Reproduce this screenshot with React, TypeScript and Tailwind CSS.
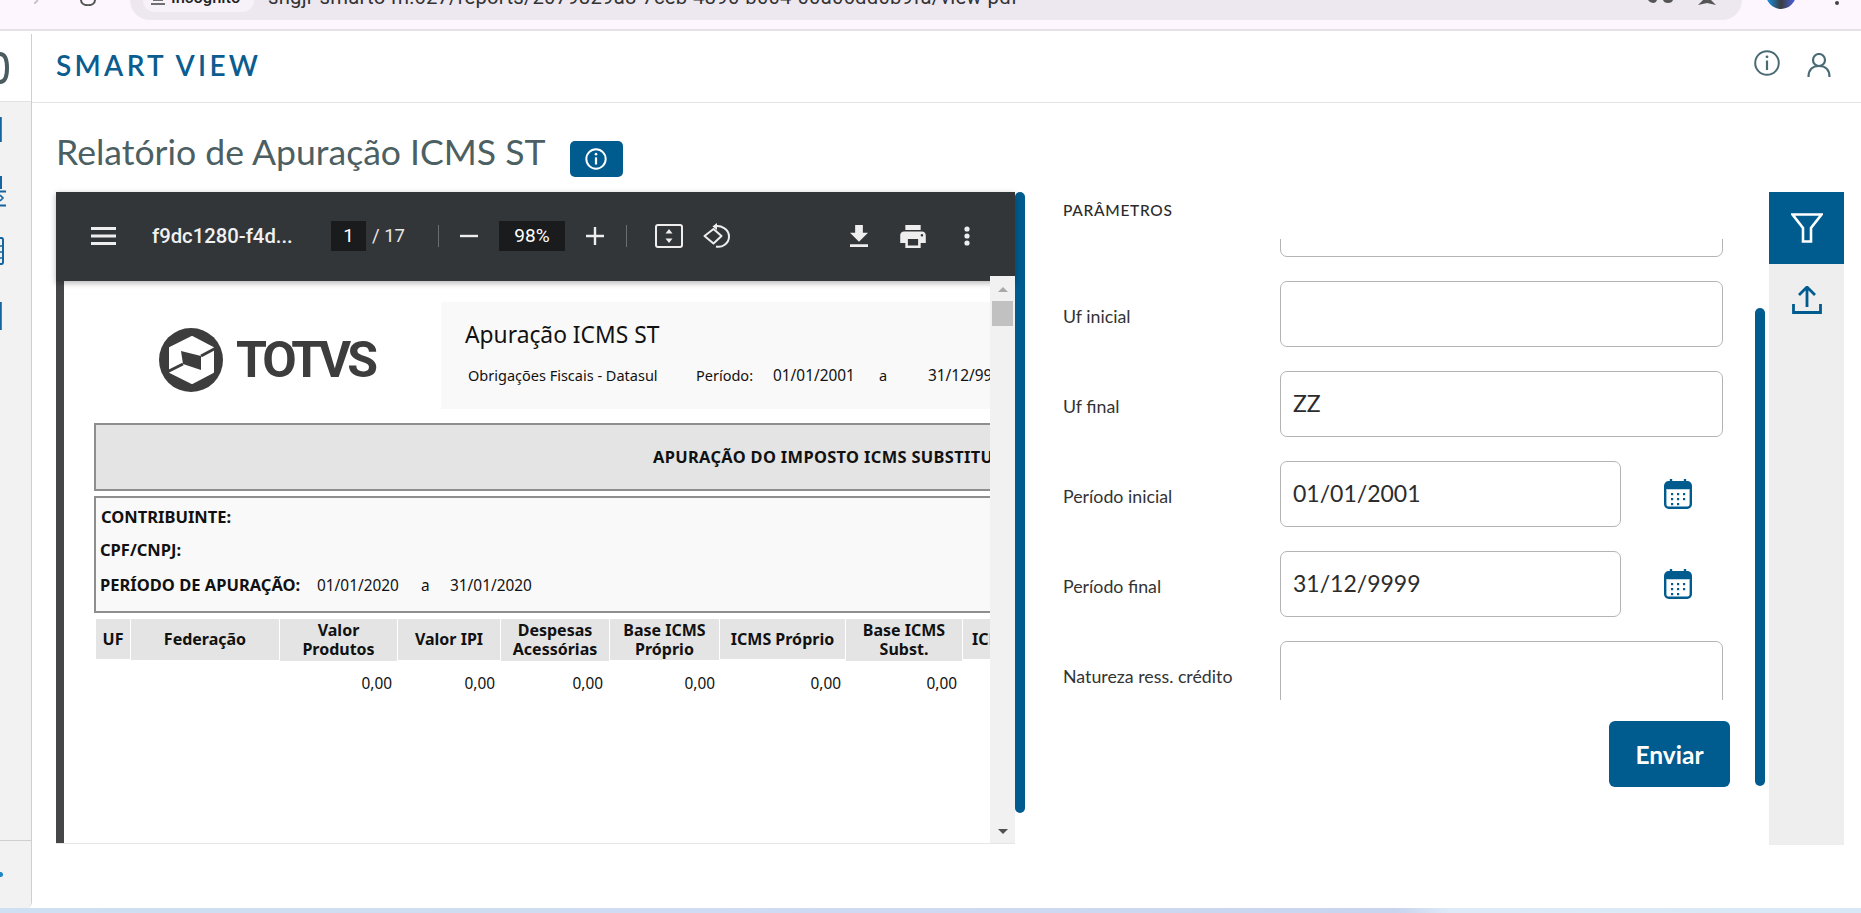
import React from "react";

const BLUE = "#005b8f";

function Calendar() {
  return (
    <svg width="28" height="30" viewBox="0 0 28 30" className="shrink-0">
      <path d="M7 0v5M21 0v5" stroke={BLUE} strokeWidth="2.4" />
      <rect x="1.2" y="3.2" width="25.6" height="25.6" rx="3.5" fill="none" stroke={BLUE} strokeWidth="2.4" />
      <rect x="1.2" y="3.2" width="25.6" height="7" rx="2" fill={BLUE} />
      {[8, 14, 20].map((x) => [15, 20, 25].map((y) => (y === 25 && x === 20 ? null : <rect key={`${x}-${y}`} x={x - 1} y={y - 1} width="2.2" height="2.2" fill={BLUE} />)))}
    </svg>
  );
}

function Field({ label, value, short, clipTop }: { label: string; value?: string; short?: boolean; clipTop?: boolean }) {
  return (
    <div className={`flex items-center shrink-0 h-[66px] pl-[38px] ${clipTop ? "-mt-[48px]" : ""}`}>
      <span className="w-[217px] shrink-0 pt-[4px] text-[17.8px] text-[#333]">{label}</span>
      <input
        readOnly
        value={value ?? ""}
        className={`h-[66px] rounded-[7px] border border-[#b4b4b4] bg-white px-[12px] pb-[2px] text-[23px] text-[#2c2c2c] outline-none ${short ? "w-[341px]" : "w-[443px]"}`}
      />
      {short && (
        <span className="ml-[43px] flex items-center">
          <Calendar />
        </span>
      )}
    </div>
  );
}

const heads = [
  { t: "UF", c: "w-[34px] h-[40px] justify-center" },
  { t: "Federação", c: "w-[148px] h-[41px] justify-center" },
  { t: "Valor Produtos", c: "w-[117px] h-[42px] px-6 justify-center" },
  { t: "Valor IPI", c: "w-[102px] h-[41px] justify-center" },
  { t: "Despesas Acessórias", c: "w-[108px] h-[42px] justify-center" },
  { t: "Base ICMS Próprio", c: "w-[109px] h-[41px] justify-center" },
  { t: "ICMS Próprio", c: "w-[125px] h-[40px] justify-center" },
  { t: "Base ICMS Subst.", c: "w-[116px] h-[42px] px-4 justify-center" },
  { t: "ICMS Subst.", c: "w-[140px] h-[40px] pl-[9px] justify-start whitespace-nowrap" },
];

const vals = [
  { c: "w-[34px]" },
  { c: "w-[148px]" },
  { c: "w-[117px] pr-[5px]", v: "0,00" },
  { c: "w-[102px] pr-[5px]", v: "0,00" },
  { c: "w-[108px] pr-[6px]", v: "0,00" },
  { c: "w-[109px] pr-[4px]", v: "0,00" },
  { c: "w-[125px] pr-[4px]", v: "0,00" },
  { c: "w-[116px] pr-[5px]", v: "0,00" },
];

function Toolbar() {
  return (
    <div className="relative z-10 flex h-[89px] shrink-0 items-center bg-[#323639] pb-[1px] text-white shadow-[0_2px_6px_rgba(0,0,0,0.3)] font-['Roboto',sans-serif]">
      <svg width="25" height="18" viewBox="0 0 25 18" className="ml-[35px]">
        <path d="M0 1.5h25M0 9h25M0 16.5h25" stroke="#eee" strokeWidth="3" />
      </svg>
      <span className="ml-[36px] w-[146px] text-[20.3px] font-medium whitespace-nowrap text-[#f1f1f1]">f9dc1280-f4d...</span>
      <span className="ml-[33px] flex h-[30px] w-[35px] items-center justify-center bg-[#191b1c] text-[19px]">1</span>
      <span className="ml-[6px] mt-[2px] w-[34px] text-[18.5px] whitespace-nowrap text-[#e8e8e8]">/ 17</span>
      <span className="ml-[32px] h-[22px] w-px bg-[#6b6e70]" />
      <svg width="18" height="4" viewBox="0 0 18 4" className="ml-[21px]">
        <path d="M0 2h18" stroke="#eee" strokeWidth="2.4" />
      </svg>
      <span className="ml-[21px] flex h-[30px] w-[66px] items-center justify-center bg-[#191b1c] text-[19px]">98%</span>
      <svg width="18" height="18" viewBox="0 0 18 18" className="ml-[21px]">
        <path d="M0 9h18M9 0v18" stroke="#eee" strokeWidth="2.4" />
      </svg>
      <span className="ml-[22px] h-[22px] w-px bg-[#6b6e70]" />
      <svg width="28" height="24" viewBox="0 0 28 24" className="ml-[28px]">
        <rect x="1" y="1" width="26" height="22" rx="2" fill="none" stroke="#eee" strokeWidth="2" />
        <path d="M14 5l-3.5 4.5h7zM14 19l-3.5-4.5h7z" fill="#eee" />
      </svg>
      <svg width="28" height="26" viewBox="0 0 28 26" className="ml-[20px]">
        <path d="M1.5 13L10.5 6l8 7-8 7.5z" fill="none" stroke="#eee" strokeWidth="2" strokeLinejoin="round" />
        <path d="M11 3.5c7-1.6 15 2.5 15 10 0 7-7 11.5-13 10" fill="none" stroke="#eee" strokeWidth="2" />
        <path d="M14 0v7l-4.5-3.5z" fill="#eee" />
      </svg>
      <svg width="18" height="22" viewBox="5 3 14 17" className="ml-[119px]">
        <path d="M19 9h-4V3H9v6H5l7 7 7-7zM5 18v2h14v-2H5z" fill="#eee" />
      </svg>
      <svg width="26" height="23" viewBox="2 3 20 18" className="ml-[32px]">
        <path d="M19 8H5c-1.66 0-3 1.34-3 3v6h4v4h12v-4h4v-6c0-1.66-1.34-3-3-3zm-3 11H8v-5h8v5zm3-7c-.55 0-1-.45-1-1s.45-1 1-1 1 .45 1 1-.45 1-1 1zm-1-9H6v4h12V3z" fill="#eee" />
      </svg>
      <svg width="6" height="20" viewBox="0 0 6 20" className="ml-[38px]">
        <circle cx="3" cy="3" r="2.6" fill="#eee" />
        <circle cx="3" cy="10" r="2.6" fill="#eee" />
        <circle cx="3" cy="17" r="2.6" fill="#eee" />
      </svg>
    </div>
  );
}

function Logo() {
  return (
    <div className="mt-[26px] ml-[95px] flex w-[282px] shrink-0 items-center self-start">
      <svg width="64" height="64" viewBox="0 0 64 64" className="shrink-0">
        <circle cx="32" cy="32" r="32" fill="#3d3d3d" />
        <path d="M11 20L33 9l21 11v24L33 55 11 44z" fill="#fff" stroke="#fff" strokeWidth="2" strokeLinejoin="round" />
        <path d="M22 23l20 5v14l-18-6z" fill="#3d3d3d" />
        <path d="M42 28L57 20M24 36L8 44" stroke="#3d3d3d" strokeWidth="3" />
      </svg>
      <span className="ml-[13px] text-[50px] leading-none font-bold tracking-[-4px] text-[#3d3d3d] font-['Roboto',sans-serif]">TOTVS</span>
    </div>
  );
}

function PdfPage() {
  return (
    <div className="h-full w-[926px] shrink-0 overflow-hidden bg-white font-['Noto_Sans',sans-serif] text-[#111]">
      <div className="w-[1200px]">
        <div className="flex pt-[21px]">
          <Logo />
          <div className="h-[107px] w-[700px] bg-[#f9f9f9] pl-[24px] pt-[13px]">
            <div className="text-[22.8px] leading-[40px] text-[#111]">Apuração ICMS ST</div>
            <div className="mt-[9px] flex items-baseline pl-[3px] text-[14.5px] leading-[22px]">
              <span className="w-[228px]">Obrigações Fiscais - Datasul</span>
              <span className="w-[77px]">Período:</span>
              <span className="w-[106px] text-[15.4px]">01/01/2001</span>
              <span className="w-[49px]">a</span>
              <span className="text-[15.4px]">31/12/9999</span>
            </div>
          </div>
        </div>
        <div className="mt-[14px] ml-[30px] flex h-[68px] items-center border-y-2 border-l-2 border-[#8e8e8e] bg-[#e4e4e4] pl-[557px] text-[16.4px] font-bold tracking-[0.35px] whitespace-nowrap">
          APURAÇÃO DO IMPOSTO ICMS SUBSTITUIÇÃO TRIBUTÁRIA
        </div>
        <div className="mt-[5px] ml-[30px] h-[117px] border-y-2 border-l-2 border-[#8e8e8e] bg-[#f9f9f9] pl-[4px] text-[16.5px] leading-[22px]">
          <div className="pt-[8px] pl-[1px] font-bold">CONTRIBUINTE:</div>
          <div className="mt-[11px] font-bold">CPF/CNPJ:</div>
          <div className="mt-[13px] flex items-baseline">
            <span className="w-[217px] font-bold">PERÍODO DE APURAÇÃO:</span>
            <span className="w-[104px] text-[15.4px]">01/01/2020</span>
            <span className="w-[29px] text-[15.4px]">a</span>
            <span className="text-[15.4px]">31/01/2020</span>
          </div>
        </div>
        <div className="mt-[6px] ml-[32px] flex items-start gap-[1px] text-[16px] leading-[19px] font-bold text-center">
          {heads.map((h) => (
            <div key={h.t} className={`flex shrink-0 items-center bg-[#e4e4e4] ${h.c}`}>
              {h.t}
            </div>
          ))}
        </div>
        <div className="mt-[12px] ml-[32px] flex gap-[1px] text-[15.4px] leading-[22px] text-right">
          {vals.map((v, i) => (
            <div key={i} className={`shrink-0 ${v.c}`}>
              {v.v ?? ""}
            </div>
          ))}
        </div>
      </div>
    </div>
  );
}

function PdfScrollbar() {
  return (
    <div className="relative z-20 -mt-[5px] flex h-[calc(100%+5px)] w-[25px] shrink-0 flex-col items-center justify-between bg-[#f1f1f1] pt-[11px] pb-[9px]">
      <div className="flex flex-col items-center">
        <span className="h-0 w-0 border-x-[5px] border-b-[5px] border-x-transparent border-b-[#a8a8a8]" />
        <span className="mt-[9px] h-[25px] w-[21px] bg-[#c1c1c1]" />
      </div>
      <span className="h-0 w-0 border-x-[5px] border-t-[5px] border-x-transparent border-t-[#505050]" />
    </div>
  );
}

function Viewer() {
  return (
    <div className="flex h-[652px] w-[959px] shrink-0 flex-col border-b border-[#e6e6e6]">
      <Toolbar />
      <div className="flex min-h-0 flex-1">
        <div className="w-[8px] shrink-0 bg-[#444648]" />
        <PdfPage />
        <PdfScrollbar />
      </div>
    </div>
  );
}

function Form() {
  return (
    <div className="flex h-[652px] w-[730px] shrink-0 flex-col font-['Lato',sans-serif]">
      <div className="h-[47px] shrink-0 pl-[38px] pt-[8px] text-[15.5px] leading-[20px] font-medium tracking-[0.7px] text-[#2b2b2b]">PARÂMETROS</div>
      <div className="flex h-[461px] shrink-0 flex-col gap-[24px] overflow-hidden">
        <Field label="" clipTop />
        <Field label="Uf inicial" />
        <Field label="Uf final" value="ZZ" />
        <Field label="Período inicial" value="01/01/2001" short />
        <Field label="Período final" value="31/12/9999" short />
        <Field label="Natureza ress. crédito" />
      </div>
      <div className="mt-[21px] flex justify-end pr-[25px]">
        <button className="h-[66px] w-[121px] rounded-[6px] bg-[#005b8f] pt-[2px] text-[24.5px] font-bold text-white">Enviar</button>
      </div>
    </div>
  );
}

function SideRail() {
  return (
    <div className="ml-[4px] flex h-[653px] w-[75px] shrink-0 flex-col bg-[#eeeeee]">
      <div className="flex h-[72px] items-center justify-center bg-[#005b8f]">
        <svg width="32" height="30" viewBox="0 0 32 30">
          <path d="M1.5 1.5h29L20 15v13.5h-8V15z" fill="none" stroke="#fff" strokeWidth="2.6" />
        </svg>
      </div>
      <div className="flex justify-center pt-[22px]">
        <svg width="30" height="28" viewBox="0 0 30 28">
          <path d="M15 1.5V21M7 9l8-8 8 8" fill="none" stroke={BLUE} strokeWidth="2.8" />
          <path d="M1.5 18v8.5h27V18" fill="none" stroke={BLUE} strokeWidth="2.8" />
        </svg>
      </div>
    </div>
  );
}

function Chrome() {
  return (
    <div className="flex h-[31px] shrink-0 overflow-hidden border-b-2 border-[#e6e0e9] bg-[#fdf6fe] font-['Roboto',sans-serif] text-[#444]">
      <div className="flex w-[130px] shrink-0 items-start">
        <svg width="8" height="4" viewBox="0 0 8 4" className="ml-[34px]">
          <path d="M0 4L4 0" stroke="#c9c4cc" strokeWidth="2" />
        </svg>
        <svg width="16" height="6" viewBox="0 0 16 6" className="ml-[38px]">
          <path d="M1 0c0 7 14 7 14 0" fill="none" stroke="#555" strokeWidth="2" />
        </svg>
      </div>
      <div className="flex h-[20px] w-[1612px] shrink-0 items-start overflow-hidden rounded-b-[24px] bg-[#ede7f0]">
        <div className="ml-[13px] flex h-[12px] w-[111px] shrink-0 items-start overflow-hidden rounded-b-[12px] bg-[#f7f2f9] pl-[7px]">
          <svg width="16" height="5" viewBox="0 0 16 5" className="shrink-0">
            <path d="M3 0h10M1 4h14" stroke="#444" strokeWidth="1.6" />
          </svg>
          <span className="-mt-[10px] ml-[5px] text-[16.5px] leading-[16px] font-medium text-[#222]">Incógnito</span>
        </div>
        <div className="ml-[14px] h-[20px] w-[920px] shrink-0 overflow-hidden text-[20.3px] leading-[20px] tracking-[0.2px] whitespace-nowrap text-[#333]">
          <div className="-mt-[13px]">shgjr-smarto-m:627/reports/2079329a8-7ceb-4390-b004-00a06dd0b9fa/view-pdf</div>
        </div>
        <div className="ml-auto flex h-[20px] w-[94px] shrink-0 items-start">
          <svg width="26" height="3" viewBox="0 0 26 3">
            <path d="M0 0h9q-1 3-4 3t-5-3zM15 0h10q-1 3-5 3t-5-3z" fill="#555" />
          </svg>
          <svg width="18" height="5" viewBox="0 0 18 5" className="ml-[24px]">
            <path d="M5 0h8l5 5-9-2-9 2z" fill="#555" />
          </svg>
        </div>
      </div>
      <div className="flex flex-1 items-start">
        <span className="-mt-[21px] ml-[24px] h-[30px] w-[30px] rounded-full bg-[linear-gradient(90deg,#1296f3,#3c3c3c_50%,#4a63f0)]" />
        <span className="ml-[39px] mt-[1px] h-[4px] w-[4px] rounded-full bg-[#444]" />
      </div>
    </div>
  );
}

function Sidebar() {
  const c = "#1565a0";
  return (
    <div className="mt-[3px] flex w-[32px] shrink-0 flex-col overflow-hidden rounded-br-[6px] border-r border-[#cfcfcf]">
      <div className="flex h-[68px] shrink-0 items-center border-b border-[#e3e3e3] bg-white">
        <svg width="10" height="32" viewBox="0 0 10 32">
          <path d="M0 2c5 0 7 6 7 14s-2 14-7 14" fill="none" stroke="#4a5c60" strokeWidth="4" />
        </svg>
      </div>
      <div className="flex h-[739px] shrink-0 flex-col items-start border-b border-[#cfcfcf] bg-[#f2f2f2] pt-[15px]">
        <svg width="8" height="25" viewBox="0 0 8 25"><path d="M0.8 0v25" stroke={c} strokeWidth="2" /></svg>
        <svg width="8" height="31" viewBox="0 0 8 31" className="mt-[34px]">
          <path d="M1 0v13M0 15.5h6M0 29.5h6" stroke={c} strokeWidth="2" />
          <path d="M0 19l3 3-3 3" fill="none" stroke={c} strokeWidth="1.6" />
        </svg>
        <svg width="8" height="28" viewBox="0 0 8 28" className="mt-[30px]">
          <path d="M0 1h1.5q1.5 0 1.5 2v22q0 2-1.5 2H0" fill="none" stroke={c} strokeWidth="2" />
          <path d="M0 9h3M0 15h3M0 21h3" stroke={c} strokeWidth="1.5" />
        </svg>
        <svg width="8" height="28" viewBox="0 0 8 28" className="mt-[37px]"><path d="M0.8 0v28" stroke={c} strokeWidth="2" /></svg>
      </div>
      <div className="flex flex-1 items-center bg-[#f2f2f2]">
        <span className="-ml-[2px] h-[5px] w-[5px] rounded-full bg-[#1f86c8]" />
      </div>
    </div>
  );
}

function AppHeader() {
  const s = "#4a6a74";
  return (
    <div className="flex h-[72px] shrink-0 items-center border-b border-[#e3e3e3] bg-white pl-[24px]">
      <span className="-mt-[4px] text-[28px] leading-none font-semibold tracking-[3.3px] whitespace-nowrap text-[#0b5c8f] font-['Lato',sans-serif]">SMART VIEW</span>
      <svg width="26" height="26" viewBox="0 0 26 26" className="mt-[-7px] ml-auto">
        <circle cx="13" cy="13" r="11.8" fill="none" stroke={s} strokeWidth="2" />
        <path d="M13 10.5V20" stroke={s} strokeWidth="2.2" />
        <circle cx="13" cy="6.8" r="1.4" fill={s} />
      </svg>
      <svg width="24" height="24" viewBox="0 0 24 24" className="mt-[-4px] mr-[30px] ml-[27px]">
        <circle cx="12" cy="7" r="6" fill="none" stroke={s} strokeWidth="2.2" />
        <path d="M1.5 24c0-7 4-11 10.5-11s10.5 4 10.5 11" fill="none" stroke={s} strokeWidth="2.2" />
      </svg>
    </div>
  );
}

export default function App() {
  return (
    <div className="flex h-[913px] w-[1861px] flex-col overflow-hidden bg-white">
      <Chrome />
      <div className="flex min-h-0 flex-1">
        <Sidebar />
        <div className="flex min-w-0 flex-1 flex-col">
          <AppHeader />
          <div className="flex h-[89px] shrink-0 items-start pl-[24px] pt-[27px] font-['Lato',sans-serif]">
            <span className="text-[35.6px] leading-[44px] whitespace-nowrap text-[#4c5f63]">Relatório de Apuração ICMS ST</span>
            <button className="mt-[11px] ml-[24px] flex h-[36px] w-[53px] items-center justify-center rounded-[5px] bg-[#005b8f]">
              <svg width="22" height="22" viewBox="0 0 20 20">
                <circle cx="10" cy="10" r="8.8" fill="none" stroke="#fff" strokeWidth="1.8" />
                <path d="M10 8.5V15" stroke="#fff" strokeWidth="2" />
                <circle cx="10" cy="5.6" r="1.2" fill="#fff" />
              </svg>
            </button>
          </div>
          <div className="flex items-start pl-[24px]">
            <Viewer />
            <div className="h-[621px] w-[10px] shrink-0 rounded-[5px] bg-[#005b8f]" />
            <Form />
            <div className="mt-[116px] h-[478px] w-[10px] shrink-0 rounded-[5px] bg-[#005b8f]" />
            <SideRail />
          </div>
        </div>
      </div>
      <div className="h-[5px] shrink-0 bg-[linear-gradient(90deg,#cfe0f3,#cfdaf2_50%,#c9d4ee_75%,#dfeaf8_78%,#d8e8f6)]" />
    </div>
  );
}
